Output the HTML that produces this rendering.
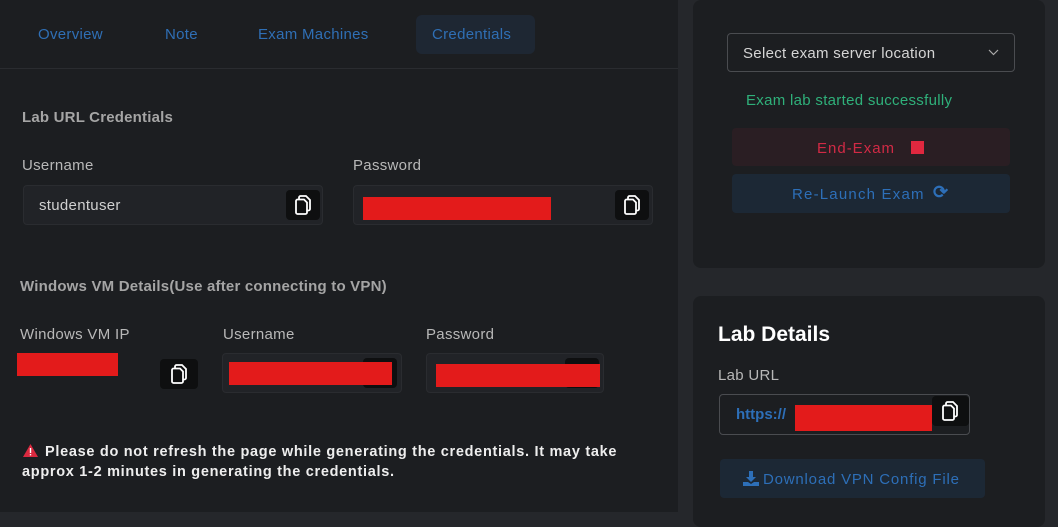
<!DOCTYPE html>
<html><head><meta charset="utf-8"><style>
*{box-sizing:border-box;margin:0;padding:0}
body{width:1058px;height:527px;background:#25272b;font-family:"Liberation Sans",sans-serif;position:relative;overflow:hidden;color:#c9c9c9}
.abs{position:absolute}
.panel{background:#1c1e21}
.tab{position:absolute;top:26px;font-size:15px;color:#2f6fb5;letter-spacing:.3px}
.lbl{position:absolute;font-size:15px;color:#b8b8b8;letter-spacing:.3px}
.inp{position:absolute;background:#212327;border:1px solid #2a2c30;border-radius:4px}
.red{position:absolute;background:#e31b1b}
.cp{position:absolute;width:34px;height:30px;background:#0e0f10;border-radius:4px}
.cp svg{position:absolute;left:9px;top:5px}
h4{position:absolute;font-size:15px;font-weight:bold;color:#a5a5a5;letter-spacing:.2px}
</style></head><body>
<svg width="0" height="0" style="position:absolute"><defs><symbol id="c" viewBox="0 0 16 20"><path d="M4 4V2.5C4 1.7 4.7 1 5.5 1H11l4 4v9c0 .8-.7 1.5-1.5 1.5H12" fill="none" stroke="#fff" stroke-width="1.8"/><path d="M2.5 4.5H9l3 3v10c0 .8-.7 1.5-1.5 1.5h-8C1.7 19 1 18.3 1 17.5V6c0-.8.7-1.5 1.5-1.5z" fill="none" stroke="#fff" stroke-width="1.8"/></symbol></defs></svg>
<div class="abs panel" style="left:0;top:0;width:678px;height:512px"></div>
<div class="abs" style="left:0;top:68px;width:678px;height:1px;background:#2a2c30"></div>
<div class="abs" style="left:416px;top:15px;width:119px;height:39px;background:#1e2733;border-radius:6px"></div>
<div class="tab" style="left:38px">Overview</div>
<div class="tab" style="left:165px">Note</div>
<div class="tab" style="left:258px">Exam Machines</div>
<div class="tab" style="left:432px">Credentials</div>
<h4 style="left:22px;top:109px">Lab URL Credentials</h4>
<div class="lbl" style="left:22px;top:157px">Username</div>
<div class="lbl" style="left:353px;top:157px">Password</div>
<div class="inp" style="left:23px;top:185px;width:300px;height:40px"></div>
<div class="abs" style="left:39px;top:197px;font-size:15px;color:#d0d0d0;letter-spacing:.3px">studentuser</div>
<div class="cp" style="left:286px;top:190px"><svg width="16" height="20"><use href="#c"/></svg></div>
<div class="inp" style="left:353px;top:185px;width:300px;height:40px"></div>
<div class="red" style="left:363px;top:197px;width:188px;height:23px"></div>
<div class="cp" style="left:615px;top:190px"><svg width="16" height="20"><use href="#c"/></svg></div>
<h4 style="left:20px;top:278px">Windows VM Details(Use after connecting to VPN)</h4>
<div class="lbl" style="left:20px;top:326px">Windows VM IP</div>
<div class="lbl" style="left:223px;top:326px">Username</div>
<div class="lbl" style="left:426px;top:326px">Password</div>
<div class="red" style="left:17px;top:353px;width:101px;height:23px"></div>
<div class="cp" style="left:160px;top:359px;width:38px"><svg width="16" height="20" style="left:11px"><use href="#c"/></svg></div>
<div class="inp" style="left:222px;top:353px;width:180px;height:40px"></div>
<div class="cp" style="left:363px;top:358px"></div>
<div class="red" style="left:229px;top:362px;width:163px;height:23px"></div>
<div class="inp" style="left:426px;top:353px;width:178px;height:40px"></div>
<div class="cp" style="left:565px;top:358px"></div>
<div class="red" style="left:436px;top:364px;width:164px;height:23px"></div>
<svg class="abs" style="left:23px;top:444px" width="15" height="13" viewBox="0 0 15 13"><path d="M7.5 0L15 13H0z" fill="#d9293f"/><rect x="6.8" y="4" width="1.4" height="5" fill="#fff"/><rect x="6.8" y="10" width="1.4" height="1.4" fill="#fff"/></svg>
<div class="abs" style="left:22px;top:442px;width:618px;font-size:14.5px;font-weight:bold;color:#eee;line-height:20px;text-indent:23px;letter-spacing:.7px">Please do not refresh the page while generating the credentials. It may take approx <span style="white-space:nowrap">1-2</span> minutes in generating the credentials.</div>

<div class="abs panel" style="left:693px;top:0;width:352px;height:268px;border-radius:8px"></div>
<div class="abs" style="left:727px;top:33px;width:288px;height:39px;border:1px solid #4a4c50;border-radius:4px"></div>
<div class="abs" style="left:743px;top:45px;font-size:15px;color:#d5d5d5;letter-spacing:.3px">Select exam server location</div>
<svg class="abs" style="left:988px;top:49px" width="11" height="7"><path d="M1 1l4.5 4.5L10 1" fill="none" stroke="#aaa" stroke-width="1.2"/></svg>
<div class="abs" style="left:746px;top:92px;font-size:15px;color:#2fb07a;letter-spacing:.3px">Exam lab started successfully</div>
<div class="abs" style="left:732px;top:128px;width:278px;height:38px;background:#2a1e23;border-radius:4px"></div>
<div class="abs" style="left:817px;top:140px;font-size:15px;color:#d12a45;letter-spacing:1px">End-Exam</div>
<div class="abs" style="left:911px;top:141px;width:13px;height:13px;background:#e0283f"></div>
<div class="abs" style="left:732px;top:174px;width:278px;height:39px;background:#1c2835;border-radius:4px"></div>
<div class="abs" style="left:792px;top:186px;font-size:15px;color:#2d6fb8;letter-spacing:1.2px">Re-Launch Exam</div>
<div class="abs" style="left:933px;top:182px;font-size:18px;font-weight:bold;color:#2d6fb8">⟳</div>

<div class="abs panel" style="left:693px;top:296px;width:352px;height:231px;border-radius:8px"></div>
<div class="abs" style="left:718px;top:323px;font-size:21px;font-weight:bold;color:#fff">Lab Details</div>
<div class="lbl" style="left:718px;top:367px">Lab URL</div>
<div class="abs" style="left:719px;top:394px;width:251px;height:41px;border:1px solid #4a4c50;border-radius:4px"></div>
<div class="abs" style="left:736px;top:406px;font-size:15px;font-weight:bold;color:#2d6fb8">https://</div>
<div class="red" style="left:795px;top:405px;width:137px;height:26px"></div>
<div class="cp" style="left:932px;top:396px;width:37px"><svg width="16" height="20" style="left:10px"><use href="#c"/></svg></div>
<div class="abs" style="left:720px;top:459px;width:265px;height:39px;background:#1c2835;border-radius:4px"></div>
<svg class="abs" style="left:743px;top:471px" width="16" height="15" viewBox="0 0 16 15"><path d="M6 0h4v6h3l-5 5-5-5h3z M0 11h5l3 2 3-2h5v4H0z" fill="#2d6fb8"/></svg>
<div class="abs" style="left:763px;top:471px;font-size:15px;color:#2d6fb8;letter-spacing:.8px">Download VPN Config File</div>
</body></html>
